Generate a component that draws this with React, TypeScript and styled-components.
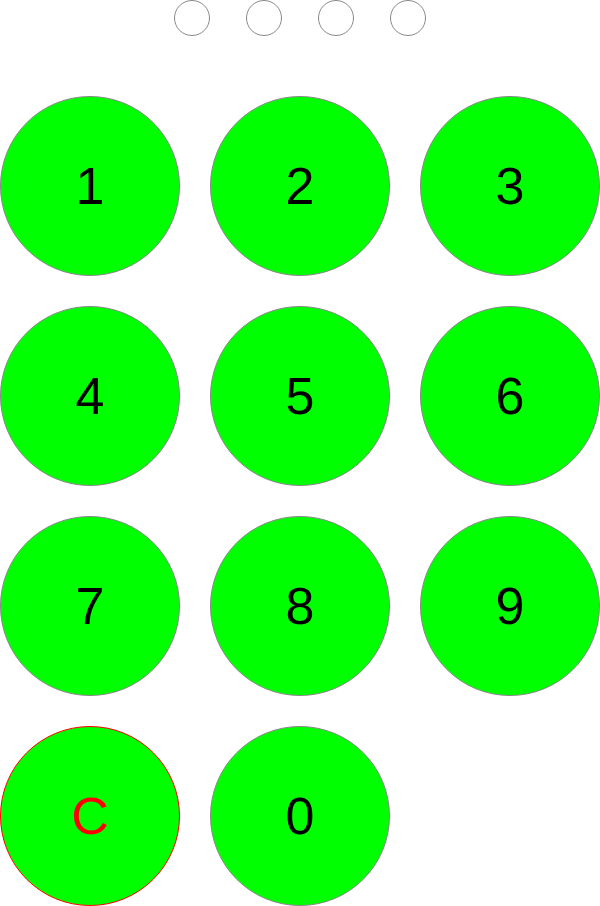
import React from "react";
import styled, { createGlobalStyle } from "styled-components";

const Global = createGlobalStyle`
  html, body { margin: 0; padding: 0; background: #fff; }
  body { font-family: "Liberation Sans", Arial, sans-serif; }
`;

const Page = styled.div`
  width: 600px;
  display: flex;
  flex-direction: column;
`;

const Dots = styled.div`
  display: flex;
  justify-content: center;
  gap: 36px;
  padding-top: 0;
  height: 95px;
  box-sizing: border-box;
`;

const Dot = styled.div`
  width: 36px;
  height: 36px;
  box-sizing: border-box;
  border: 1.5px solid #888;
  border-radius: 50%;
`;

const Pad = styled.div`
  display: grid;
  grid-template-columns: repeat(3, 180px);
  grid-auto-rows: 180px;
  gap: 30px;
  padding-top: 1px;
`;

const Key = styled.button<{ $clear?: boolean }>`
  width: 180px;
  height: 180px;
  box-sizing: border-box;
  margin: 0;
  padding: 0;
  border-radius: 50%;
  border: 1px solid ${(p) => (p.$clear ? "#ff0000" : "#888")};
  background: #00ff00;
  color: ${(p) => (p.$clear ? "#ff0000" : "#000")};
  font-family: "Liberation Sans", Arial, sans-serif;
  font-size: 52px;
  line-height: 1;
  display: flex;
  align-items: center;
  justify-content: center;
  cursor: pointer;
`;

const keys = ["1", "2", "3", "4", "5", "6", "7", "8", "9"];

export default function App() {
  return (
    <Page>
      <Global />
      <Dots>
        {[0, 1, 2, 3].map((i) => (
          <Dot key={i} />
        ))}
      </Dots>
      <Pad>
        {keys.map((k) => (
          <Key key={k}>{k}</Key>
        ))}
        <Key $clear>C</Key>
        <Key>0</Key>
      </Pad>
    </Page>
  );
}
